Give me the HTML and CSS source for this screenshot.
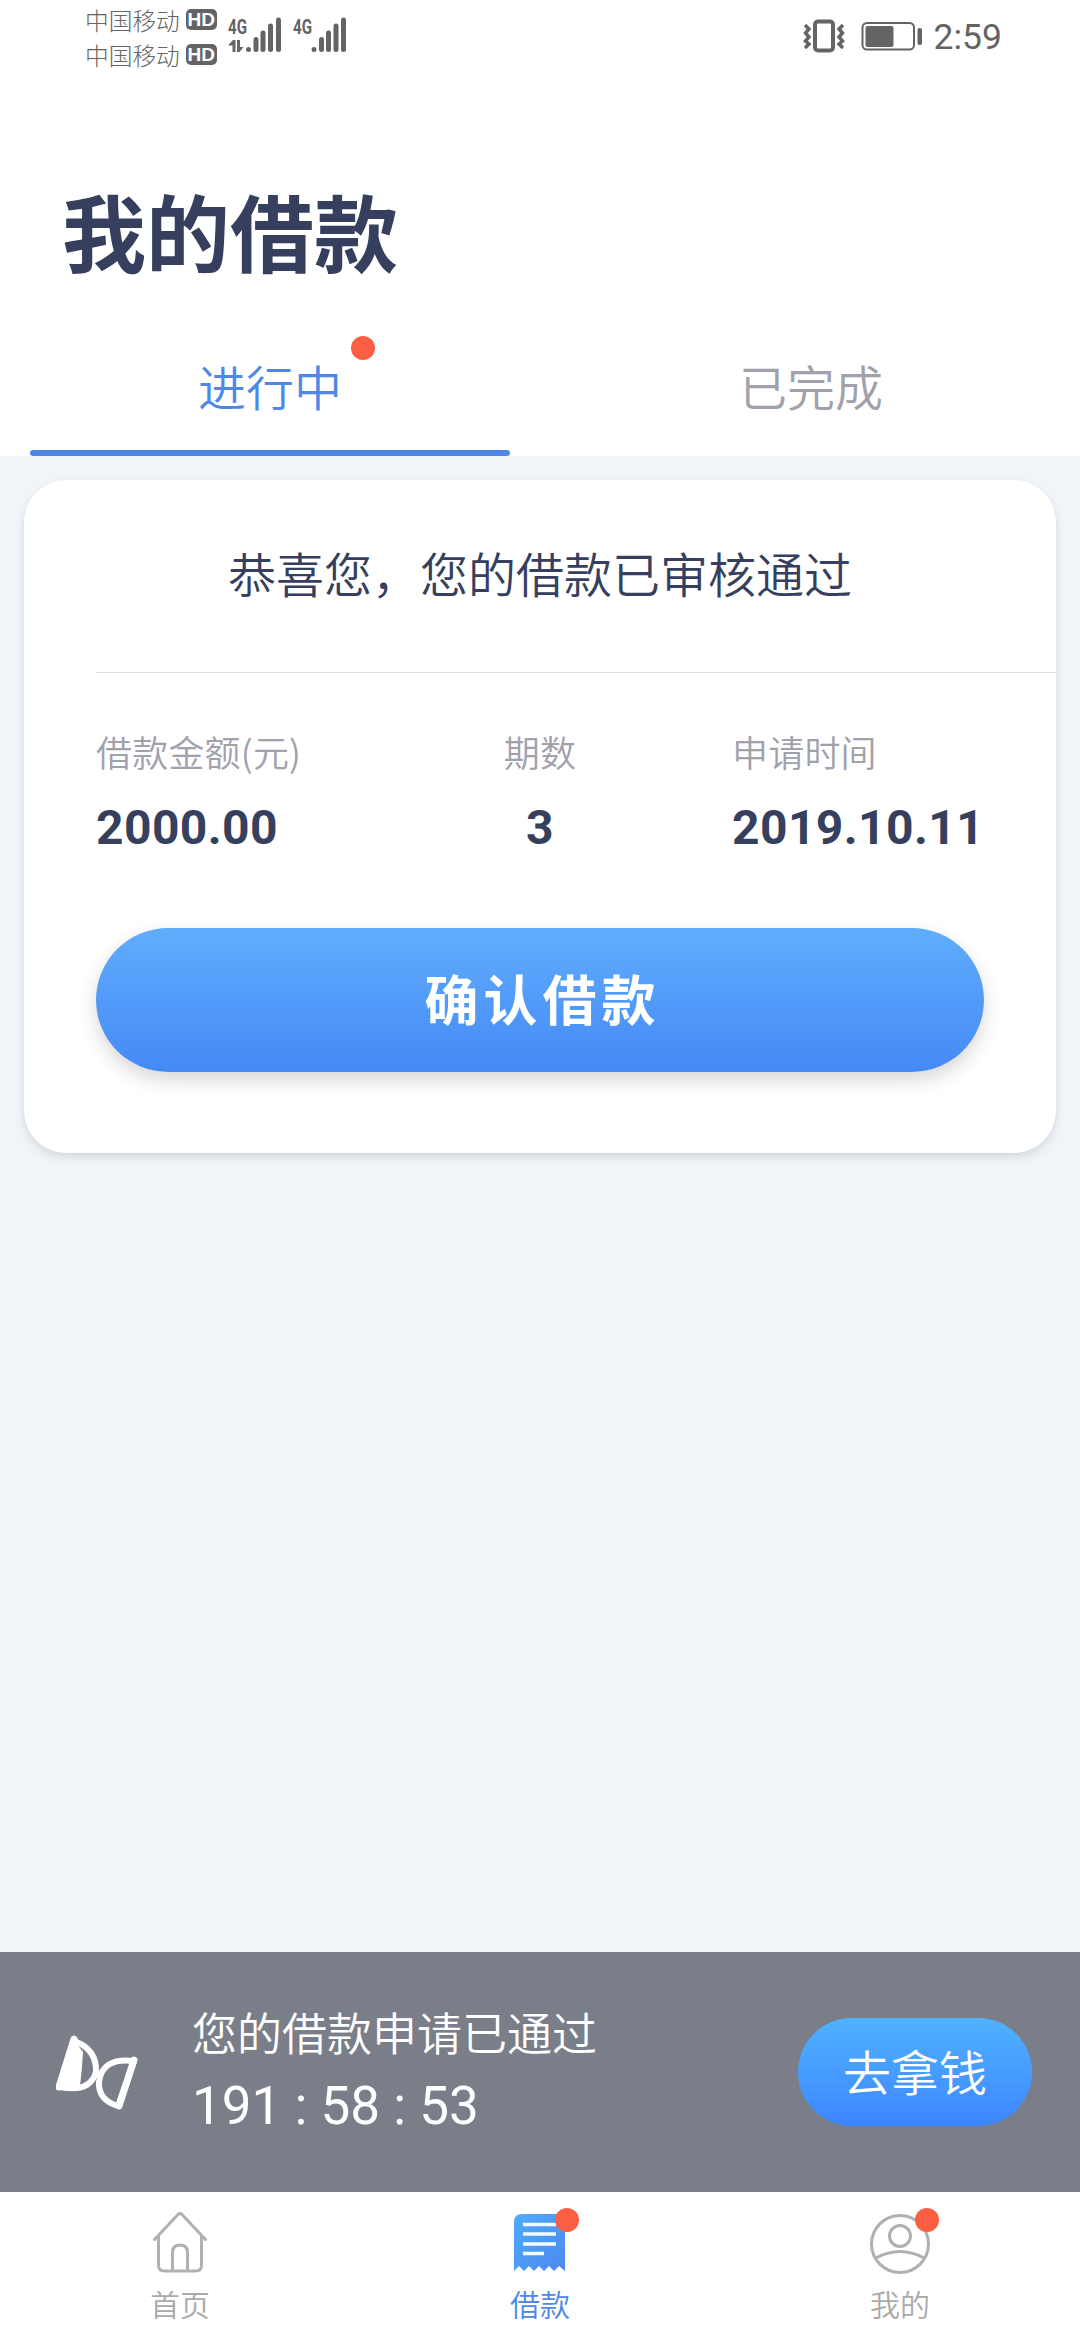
FILE: index.html
```html
<!DOCTYPE html>
<html lang="zh-CN">
<head>
<meta charset="utf-8">
<title>我的借款</title>
<link rel="stylesheet" href="styles.css">
</head>
<body>
<div class="app">
  <header class="header">
    <div class="status">
      <div class="carriers">
        <div class="carrier"><span>中国移动</span><b class="hd">HD</b></div>
        <div class="carrier"><span>中国移动</span><b class="hd">HD</b></div>
      </div>
      <svg class="signals" width="122" height="38" viewBox="0 0 122 38">
        <g class="net-label">
          <text x="0" y="18" textLength="19" lengthAdjust="spacingAndGlyphs">4G</text>
          <text x="65" y="18" textLength="19" lengthAdjust="spacingAndGlyphs">4G</text>
        </g>
        <path class="bars" d="M20.500 33.500v0M28 23.500v10M35 17v16.500M42.500 10v23.500M50.500 4v29.500M86 33.500v0M93.500 23.500v10M100.500 17v16.500M108 10v23.500M115.500 4v29.500"/>
        <path class="ink" d="M0 29.500L5 24h2.500v12H4.500v-6.500zM9 24h3v7h3.500L11.500 36H9z"/>
      </svg>
      <div class="status-right">
        <svg width="120" height="36" viewBox="0 0 120 36">
          <rect class="phone" x="12" y="3.500" width="18" height="29" rx="3"/>
          <path class="wave" d="M2 7l4 4-3.500 4L6 19l-3.500 4L6 26l-4 4M40 7l-4 4 3.500 4L36 19l3.500 4L36 26l4 4"/>
          <rect class="battery" x="59.500" y="5" width="51.500" height="26.500" rx="4.500"/>
          <rect class="ink" x="62.500" y="8" width="28" height="21" rx="2"/>
          <rect class="ink" x="114.500" y="10" width="4.500" height="17" rx="2"/>
        </svg>
        <span class="clock">2:59</span>
      </div>
    </div>
    <h1 class="title">我的借款</h1>
    <nav class="tabs">
      <a class="tab tab-active"><span>进行中<i class="dot tab-dot"></i></span></a>
      <a class="tab"><span>已完成</span></a>
    </nav>
  </header>

  <main class="content">
    <section class="card">
      <p class="headline">恭喜您，您的借款已审核通过</p>
      <div class="details">
        <div class="detail"><span class="label">借款金额(元)</span><strong class="value">2000.00</strong></div>
        <div class="detail detail-mid"><span class="label">期数</span><strong class="value">3</strong></div>
        <div class="detail detail-date"><span class="label">申请时间</span><strong class="value">2019.10.11</strong></div>
      </div>
      <button class="confirm">确认借款</button>
    </section>
  </main>

  <aside class="notice">
    <svg class="hourglass" width="84" height="78" viewBox="0 0 84 78">
      <path d="M18 6L4 52Q34 58 40 37Q41 14 18 6z"/>
      <path d="M78 26Q46 22 43 47Q42 65 62 71z"/>
      <path class="sand" d="M18 5L27 17Q26 35 24 51Q14 54 4 52z"/>
      <path class="caps" d="M18 4L3 52M78 25L63 71"/>
    </svg>
    <div class="notice-body">
      <p class="notice-text">您的借款申请已通过</p>
      <p class="timer">191 : 58 : 53</p>
    </div>
    <button class="collect">去拿钱</button>
  </aside>

  <nav class="bottom-nav">
    <a class="nav-item">
      <svg width="64" height="64" viewBox="0 0 64 64">
        <path class="line" d="M6.500 29.500L30 4.500Q32 2.700 34 4.500L57.500 29.500M10.500 26v29q0 6 6 6h31q6 0 6-6V26M24.500 61V42.500q0-7.500 7.500-7.500t7.500 7.500V61"/>
      </svg>
      <span>首页</span>
    </a>
    <a class="nav-item nav-active">
      <svg width="64" height="64" viewBox="0 0 64 64">
        <defs><linearGradient id="bill" x1="0" y1="0" x2="1" y2="1"><stop offset="0" stop-color="#4eacfa"/><stop offset="1" stop-color="#4d87f0"/></linearGradient></defs>
        <path fill="url(#bill)" d="M6 12q0-8 8-8h36q7 0 7 8v49l-6-5-5 5-5-5-5 5-5-5-5 5-5-5-5 5-5-5-5 5z"/>
        <path class="bill-lines" d="M15 14.500h33M15 24h33M15 34h33M15 43.500h21"/>
      </svg>
      <span>借款</span>
      <i class="dot nav-dot"></i>
    </a>
    <a class="nav-item">
      <svg width="64" height="64" viewBox="0 0 64 64">
        <circle class="line" cx="32" cy="34" r="28.500"/>
        <circle class="line" cx="32" cy="26" r="10.500"/>
        <path class="line" d="M8 48Q32 35 56 48"/>
      </svg>
      <span>我的</span>
      <i class="dot nav-dot"></i>
    </a>
  </nav>
</div>
</body>
</html>
```
FILE: styles.css
```css
* { box-sizing: border-box; }

body {
  margin: 0;
  font-family: "Noto Sans CJK SC", sans-serif;
  font-weight: 350;
  color: #363f5d;
}

h1, p { margin: 0; }

button {
  display: block;
  padding: 0;
  border: 0;
  color: #fff;
  font-family: inherit;
}

.app {
  width: 1080px;
  height: 2340px;
  display: flex;
  flex-direction: column;
  background: #f1f5fa;
  overflow: hidden;
}

.header {
  height: 456px;
  background: #fff;
  display: flex;
  flex-direction: column;
}

.status {
  height: 72px;
  padding: 0 78px 0 85px;
  display: flex;
  align-items: flex-start;
  color: #646464;
}

.carriers { padding-top: 2px; width: 143px; }

.carrier {
  height: 35px;
  display: flex;
  align-items: center;
  gap: 6px;
  font-size: 23.700px;
  font-weight: 300;
  line-height: 34px;
}

.hd {
  width: 31px;
  height: 21px;
  border-radius: 5px;
  background: #646464;
  color: #fff;
  font: bold 19px/21px "Liberation Sans", sans-serif;
  text-align: center;
}

.signals { margin-top: 16px; }
.net-label { font: bold 20px Roboto, sans-serif; fill: #646464; }
.bars { fill: none; stroke: #646464; stroke-width: 5; stroke-linecap: round; }
.ink { fill: #646464; }

.status-right {
  margin-left: auto;
  padding-top: 18px;
  display: flex;
  gap: 11px;
}

.phone { fill: none; stroke: #646464; stroke-width: 4; }
.wave { fill: none; stroke: #646464; stroke-width: 3.5; }
.battery { fill: none; stroke: #646464; stroke-width: 2; }
.clock { font: 35.500px/39px Roboto, sans-serif; }

.title {
  margin-top: 98px;
  padding-left: 62px;
  font-size: 84px;
  line-height: 120px;
  font-weight: 700;
}

.tabs {
  margin-top: auto;
  padding: 0 30px;
  display: grid;
  grid-template-columns: 480px 480px;
  gap: 61px;
}

.tab {
  height: 136px;
  padding-top: 30px;
  border-bottom: 6px solid transparent;
  text-align: center;
  font-size: 48px;
  line-height: 71px;
  color: #a0a1ac;
}

.tab span { position: relative; }
.tab-active { position: relative; color: #4d88e8; border: 0; }
.tab-active::after {
  content: "";
  position: absolute;
  left: 0;
  bottom: 0;
  width: 480px;
  height: 6px;
  border-radius: 3px;
  background: #4d88e8;
}

.dot {
  position: absolute;
  width: 24px;
  height: 24px;
  border-radius: 50%;
  background: #fb5f43;
}
.tab-dot { right: -33px; top: -14px; }

.content { flex: 1; padding: 24px; }

.card {
  height: 673px;
  border-radius: 42px;
  background: #fff;
  box-shadow: 0 4px 8px rgba(60, 70, 80, .17);
}

.headline {
  height: 193px;
  margin-left: 72px;
  padding-right: 72px;
  border-bottom: 1px solid #dfdfdf;
  text-align: center;
  font-size: 48px;
  line-height: 185px;
}

.details {
  margin: 0 72px;
  padding-top: 53px;
  height: 255px;
  display: grid;
  grid-template-columns: 296px 296px 296px;
}

.detail { display: flex; flex-direction: column; }
.detail-mid { align-items: center; }
.detail-date { padding-left: 44px; }
.label { font-size: 36px; line-height: 51px; color: #a0a1ac; letter-spacing: .2px; white-space: nowrap; }
.value { margin-top: 22px; font: bold 48px/57px Roboto, sans-serif; letter-spacing: .4px; }

.confirm {
  width: 888px;
  height: 144px;
  margin: 0 72px;
  border-radius: 72px;
  background: linear-gradient(#60adfd, #4589f5);
  box-shadow: 0 8px 18px rgba(70, 50, 60, .2);
  font-size: 54px;
  line-height: 80px;
  padding-bottom: 5px;
  font-weight: 700;
  letter-spacing: 5px;
  text-indent: 5px;
}

.notice {
  height: 240px;
  padding: 0 48px 0 56px;
  display: flex;
  align-items: center;
  background: #7a7e89;
  color: #fff;
}

.hourglass { margin-top: 4px; fill: none; stroke: #fff; stroke-width: 6; stroke-linecap: round; stroke-linejoin: round; }
.hourglass .sand { fill: #fff; stroke: none; }
.hourglass .caps { stroke-width: 7; }
.notice-body { margin-left: 52px; padding-bottom: 8px; }
.notice-text { font-size: 45px; line-height: 66px; }
.timer { margin-top: 9px; font: 53px/64px Roboto, sans-serif; }

.collect {
  width: 234px;
  height: 108px;
  margin-left: auto;
  border-radius: 54px;
  background: linear-gradient(#4fb2ff, #3d86ff);
  font-size: 48px;
  line-height: 70px;
  padding-bottom: 5px;
  font-weight: 350;
}

.bottom-nav {
  height: 148px;
  display: grid;
  grid-template-columns: repeat(3, 1fr);
  background: #fff;
}

.nav-item {
  position: relative;
  padding-top: 18px;
  display: flex;
  flex-direction: column;
  align-items: center;
  font-size: 30px;
  line-height: 44px;
  color: #aaa;
}

.nav-item span { margin-top: 7px; }
.nav-active { color: #4d88e8; }
.nav-dot { left: 195px; top: 16px; }
.line { fill: none; stroke: #b0b0b0; stroke-width: 3; stroke-linecap: round; }
.bill-lines { fill: none; stroke: #f4fbff; stroke-width: 3.5; }
```
